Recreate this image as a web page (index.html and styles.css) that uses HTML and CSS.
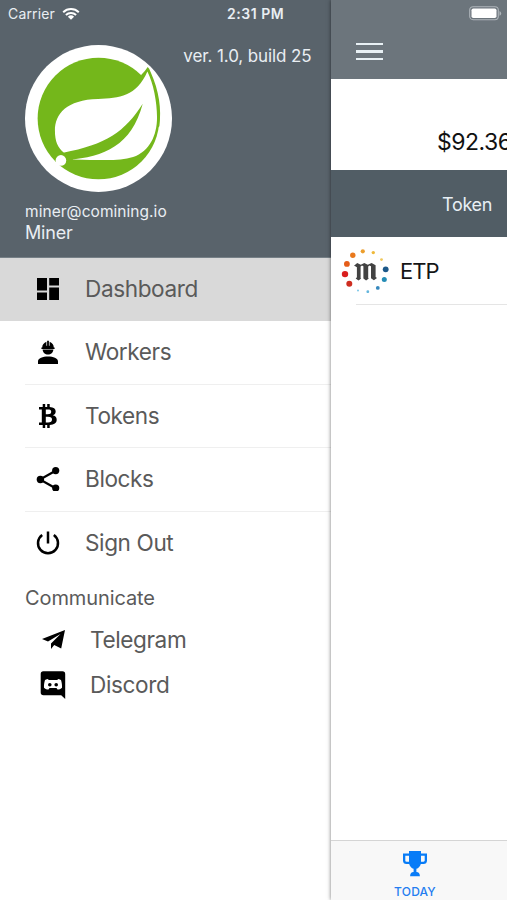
FILE: index.html
```
<!DOCTYPE html>
<html lang="en">
<head>
<meta charset="utf-8">
<meta name="viewport" content="width=device-width, initial-scale=1">
<title>Miner</title>
<link rel="stylesheet" href="styles.css">
</head>
<body>
<div class="app">
  <aside class="drawer">
    <header class="profile">
      <div class="status">
        <span class="carrier">Carrier</span>
        <svg class="wifi" viewBox="0 0 18 13"><path d="M1.2 5.2a11.3 11.3 0 0 1 15.6 0M3.9 8a7.4 7.4 0 0 1 10.2 0" fill="none" stroke="#fff" stroke-width="2"/><path d="M9 12.8 5.9 9.7a4.6 4.6 0 0 1 6.2 0z" fill="#fff"/></svg>
        <span class="time">2:31 PM</span>
      </div>
      <div class="identity">
        <svg class="avatar" viewBox="30 28 442 442">
          <circle cx="251" cy="249" r="221" fill="#fff"/>
          <circle cx="251" cy="249" r="183" fill="#74b71b"/>
          <path d="M379 118Q391 107 399 94Q404 98 408 110C433 165 441 222 434 272L390 310Z" fill="#74b71b"/>
          <path d="M398 108C365 183 314 188 250 190C155 192 120 235 120 285C120 318 128 335 147 352L175 372C250 373 310 379 355 365C405 347 427 300 427 245C427 200 416 143 398 108Z" fill="#fff"/>
          <path d="M145 352C273 328 331 289 384 205C350 331 270 364 158 374Z" fill="#74b71b"/>
          <circle cx="138" cy="375" r="16" fill="#fff"/>
        </svg>
        <span class="version">ver. 1.0, build 25</span>
      </div>
      <div class="email">miner@comining.io</div>
      <div class="name">Miner</div>
    </header>
    <nav class="menu">
      <a class="item active">
        <svg viewBox="0 0 24 24"><path d="M1 1h10v12.5H1zM13.2 1H23v7.4h-9.8zM1 15.6h10V23H1zM13.2 10.6H23V23h-9.8z"/></svg>
        <span class="label">Dashboard</span>
      </a>
      <a class="item">
        <svg viewBox="0 0 24 24"><path d="M6.2 7.6c0-3 1.8-5 4.2-5.9v4h.7V.7h1.8v5h.7v-4c2.5.9 4.2 2.9 4.2 5.9h.8v1.3H5.4V7.6zM6.6 9.6h10.8c-.2 3-2.5 5-5.4 5s-5.2-2-5.4-5zM2 24v-2.4c0-3.2 4.8-5 10-5s10 1.8 10 5V24z"/></svg>
        <span class="label">Workers</span>
      </a>
      <a class="item">
        <svg viewBox="0 0 24 24"><path d="M6.7 0h2.5v3h2V0h2.5v3.1c4 .3 6 1.8 6 4.4 0 2-1.1 3.2-3 3.8 2.6.5 4 2.1 4 4.5 0 3.3-2.6 5-7 5.2v3h-2.5v-3h-2v3H6.7v-3H3v-2.4h2.8V5.4H3V3h3.7zM9.8 5.5v4.8h1.9c2.5 0 3.5-.8 3.5-2.5s-.9-2.3-3.5-2.3zm0 7.2v5.7H12c2.8 0 4-.9 4-2.9 0-1.9-1.1-2.8-4-2.8z"/></svg>
        <span class="label">Tokens</span>
      </a>
      <a class="item">
        <svg viewBox="0 0 24 24"><path d="m20 3.5-16 9 16 9" fill="none" stroke="#000" stroke-width="2.2"/><circle cx="19.7" cy="3.6" r="3.6"/><circle cx="4.4" cy="12.5" r="3.7"/><circle cx="19.7" cy="21" r="3.6"/></svg>
        <span class="label">Blocks</span>
      </a>
      <a class="item">
        <svg viewBox="0 0 24 24"><path d="M12 .5v12M6.2 4.1a10 10 0 1 0 11.6 0" fill="none" stroke="#000" stroke-width="2.5"/></svg>
        <span class="label">Sign Out</span>
      </a>
    </nav>
    <h2 class="section"><span>Communicate</span></h2>
    <nav class="links">
      <a class="link">
        <svg viewBox="0 0 26 28"><path d="M25 4 2 13l6 2.6L20.5 8 11 17.5V23l3.2-4 7 3.6z"/></svg>
        <span class="label">Telegram</span>
      </a>
      <a class="link">
        <svg viewBox="0 0 26 28"><path fill-rule="evenodd" d="M3.5.3h19A2.7 2.7 0 0 1 25.2 3v25l-4-3.7H3.5A2.8 2.8 0 0 1 .7 21.5V3A2.7 2.7 0 0 1 3.5.3zM8 7.9C6.5 8 5 9 5 9c-.8 2.5-1.2 5.4-1 7.7 1.1 1.4 3 1.8 4.5 1.8l1-1.5h7l1 1.5c1.5 0 3.4-.4 4.5-1.8.2-2.3-.2-5.2-1-7.7 0 0-1.5-1-3-1.1l-.6 1.2H8.6z"/><circle cx="9.8" cy="13.8" r="1.8"/><circle cx="16.2" cy="13.8" r="1.8"/></svg>
        <span class="label">Discord</span>
      </a>
    </nav>
  </aside>
  <main class="content">
    <header class="topbar">
      <svg class="battery" viewBox="0 0 33 15"><rect x=".7" y=".7" width="28.6" height="13" rx="3.4" fill="none" stroke="#aeb5ba" stroke-width="1.1"/><rect x="2.5" y="2.4" width="25" height="9.6" rx="1.8" fill="#fff"/><path d="M30.5 5v4.8q1.7-.7 1.7-2.4T30.5 5z" fill="#aeb5ba"/></svg>
      <div class="burger"><i></i><i></i><i></i></div>
    </header>
    <div class="balance"><span>$92.36</span></div>
    <div class="heading"><span>Token</span></div>
    <div class="coin">
      <svg class="coin-logo" viewBox="0 0 48 48">
        <g><circle cx="11.8" cy="10.2" r="2.7" fill="#e9791d"/><circle cx="21.8" cy="6.3" r="2.1" fill="#ec9e2d"/><circle cx="32.3" cy="7.6" r="1.7" fill="#efb93a"/><circle cx="40.5" cy="14.6" r="1.4" fill="#efc85c"/><circle cx="5.9" cy="18.9" r="2.9" fill="#e55d1a"/><circle cx="4" cy="29.1" r="3.2" fill="#d91e1e"/><circle cx="8.3" cy="38.8" r="3" fill="#ce2d20"/><circle cx="17" cy="45.4" r="1" fill="#7cc7e8"/><circle cx="26.8" cy="46.7" r="1.4" fill="#64b6dd"/><circle cx="36.8" cy="42.9" r="1.9" fill="#3688bd"/><circle cx="43.3" cy="34.6" r="2.5" fill="#248cb5"/><circle cx="44.7" cy="24.3" r="2.9" fill="#1c5889"/></g>
        <path d="m13 20.7 3.2-2.6 3.6 1.7 3.5-1.7 3.5 1.7 3.8-1.7 4 2.2v11.8l1.4.9-3.1 2.2-2.9-1.9V21.2l-1.6-.7-1.2 1v11.6l.6.4-2.7 1.9-2.7-2V21.3l-1.4-.8-1.4 1v11.7l.6.4-2.7 1.8-2.8-2 1.2-1.2v-10l-1.6-.9z" fill="#424242"/>
      </svg>
      <span class="symbol">ETP</span>
    </div>
    <footer class="tabbar">
      <svg class="trophy" viewBox="0 0 26 26"><path fill-rule="evenodd" d="M7 0h12v2.5h6v7.2c0 2-1.4 3.3-3.4 3.3h-2.8c-.7 2.5-2.3 4.2-4.4 4.8v3.1c2.2.1 3.5 1.4 3.5 4.3H8.1c0-2.9 1.3-4.2 3.5-4.3v-3.1c-2.1-.6-3.7-2.3-4.4-4.8H4.4C2.4 13 1 11.7 1 9.7V2.5h6zM3.3 4.8v4.8c0 .8.4 1.2 1.2 1.2H7v-6zm15.7 0v6h2.5c.8 0 1.2-.4 1.2-1.2V4.8z" fill="#087cf7"/></svg>
      <span class="tab-label">TODAY</span>
    </footer>
  </main>
</div>
</body>
</html>
```
FILE: styles.css
```
* { box-sizing: border-box; }
body { margin: 0; font-family: Inter, "Liberation Sans", sans-serif; background: #fff; }
.app { display: grid; grid-template-columns: 331px 176px; width: 507px; height: 900px; overflow: hidden; }
svg { display: block; flex: none; }
span { white-space: nowrap; }

.drawer { background: #fff; height: 900px; }
.profile { height: 258px; background: #59636b; color: #e9eef3; border-bottom: 1px solid #768087; }
.status { display: flex; height: 44.5px; padding: 5px 0 0 8px; line-height: 18px; }
.carrier { font-size: 14px; width: 54px; letter-spacing: 0.15px; }
.wifi { width: 18px; height: 13px; margin-top: 2px; }
.time { margin-left: 147px; font-size: 14px; font-weight: 600; letter-spacing: 0.55px; }
.identity { display: flex; padding-left: 25.3px; height: 157px; }
.avatar { width: 147px; height: 147px; }
.version { margin-left: 11px; font-size: 17px; line-height: 23px; letter-spacing: -0.1px; }
.email { padding-left: 25px; font-size: 15.5px; line-height: 20px; letter-spacing: 0.05px; }
.name { padding-left: 25px; font-size: 18px; line-height: 21px; letter-spacing: -0.2px; }

.item { display: flex; align-items: center; height: 63.5px; margin-left: 25px; padding-left: 11px; border-bottom: 1.5px solid #efefef; gap: 25px; }
.item svg { width: 24px; height: 24px; }
.item.active { margin-left: 0; padding: 0 0 1.5px 36px; background: #d9d9d9; border: 0; height: 63px; }
.item:last-child { border: 0; }
.label { color: #5a5a5a; font-size: 22.6px; line-height: 30px; letter-spacing: -0.4px; }
.section { margin: 8px 0 0 25px; height: 30px; font-size: 20px; line-height: 30px; font-weight: 400; color: #5a5a5a; letter-spacing: -0.1px; }
.links { margin-top: 4px; }
.link { display: flex; align-items: center; height: 45px; padding-left: 40px; gap: 24px; }
.link svg { width: 26px; height: 28px; }

.content { position: relative; display: flex; flex-direction: column; height: 900px; background: #fff; box-shadow: 0 0 4px rgba(0, 0, 0, 0.55); }
.topbar { height: 79px; background: #6c757c; }
.battery { width: 33px; height: 15px; margin: 0 0 0 138px; transform: translateY(6px); }
.burger { display: flex; flex-direction: column; gap: 5px; width: 27px; margin: 28px 0 0 25px; }
.burger i { height: 2.4px; background: #e8f0f4; }
.balance { height: 91px; padding: 48px 0 0 106px; font-size: 23px; line-height: 30px; color: #111; letter-spacing: -0.5px; }
.heading { height: 67px; padding: 20px 0 0 111px; background: #515d65; color: #e8eff5; font-size: 18px; line-height: 30px; letter-spacing: -0.3px; }
.coin { display: flex; height: 68px; padding-left: 10px; background: linear-gradient(#e5e5e5, #e5e5e5) 25px 67px / 151px 1px no-repeat; }
.coin-logo { width: 48px; height: 48px; margin-top: 8px; }
.symbol { flex: 1; margin-left: 11px; padding-top: 19px; font-size: 22px; line-height: 30px; color: #151515; letter-spacing: -0.9px; }
.tabbar { display: flex; flex-direction: column; align-items: center; margin-top: auto; height: 60px; padding: 10px 8px 0 0; background: #f8f8f8; border-top: 1px solid #d5d5d5; }
.trophy { width: 26px; height: 26px; }
.tab-label { margin-top: 7px; font-size: 12px; line-height: 16px; font-weight: 500; color: #247df0; letter-spacing: 0.2px; }
```
